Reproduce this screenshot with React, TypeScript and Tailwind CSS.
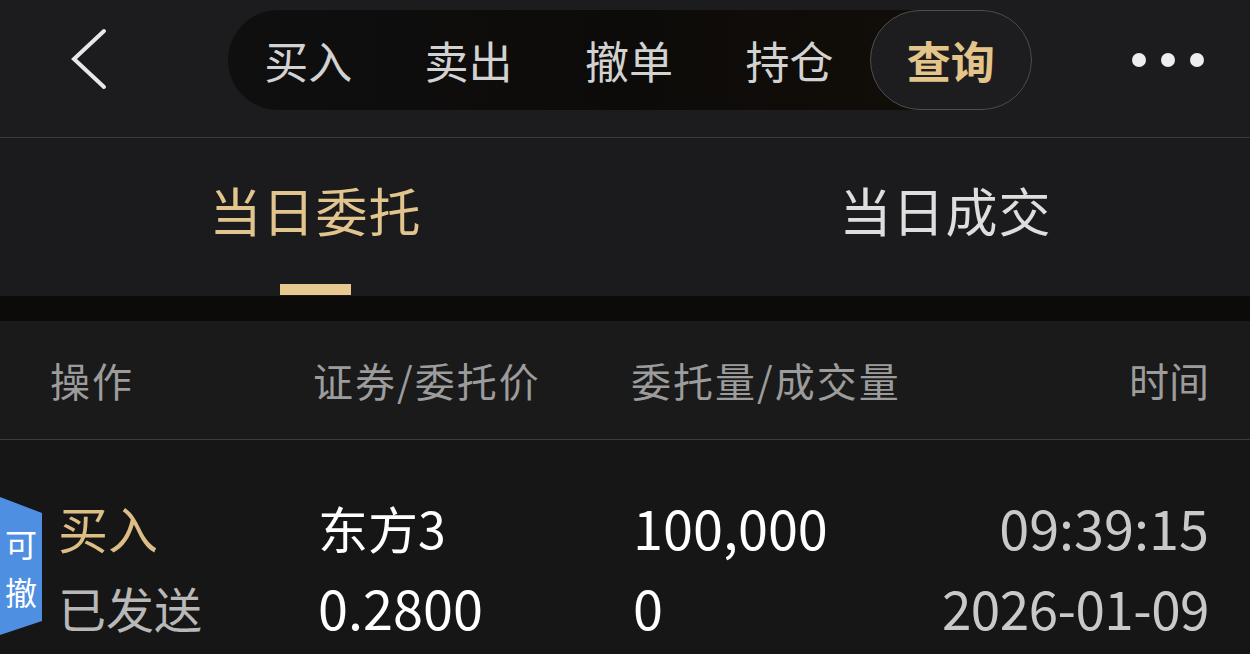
import React from "react";

const F = { fontFamily: '"Noto Sans CJK SC", "Noto Sans", sans-serif' };

function Back() {
  return (
    <svg width="40" height="64" viewBox="0 0 40 64" className="shrink-0">
      <polyline points="34,3 4,31 34,59" fill="none" stroke="#e8e8e8" strokeWidth="4" strokeLinecap="round" strokeLinejoin="miter" />
    </svg>
  );
}

export default function App() {
  const tabs = ["买入", "卖出", "撤单", "持仓", "查询"];
  return (
    <div className="w-[1250px] h-[654px] overflow-hidden bg-[#161616] flex flex-col" style={F}>
      {/* top bar */}
      <div className="h-[138px] shrink-0 bg-[#1c1c1e] border-b border-[#3a3a3c] flex items-start pt-[10px]">
        <div className="w-[228px] h-[100px] flex items-center pl-[70px]">
          <Back />
        </div>
        <div className="w-[804px] h-[100px] rounded-full bg-gradient-to-r from-[#0f0f10] via-[#0d0b09] to-[#130e08] flex">
          {tabs.map((t, i) =>
            i === 4 ? (
              <div key={t} className="flex-1 rounded-full border border-[#4e4e50] bg-[#1d1d1f] flex items-center justify-center text-[44px] font-bold text-[#e3c48b] leading-none">
                {t}
              </div>
            ) : (
              <div key={t} className="flex-1 flex items-center justify-center text-[44px] text-[#d2d2d2] leading-none">
                {t}
              </div>
            )
          )}
        </div>
        <div className="flex-1 h-[100px] flex items-center justify-end pr-[46px] gap-[15px]">
          <span className="w-[14px] h-[14px] rounded-full bg-[#eeeeee]" />
          <span className="w-[14px] h-[14px] rounded-full bg-[#eeeeee]" />
          <span className="w-[14px] h-[14px] rounded-full bg-[#eeeeee]" />
        </div>
      </div>

      {/* sub tabs */}
      <div className="h-[158px] shrink-0 bg-[#1b1b1d] flex">
        <div className="flex-1 flex flex-col items-center">
          <div className="ml-[6px] mt-[46px] text-[52px] leading-none text-[#e2c48e] tracking-[1px]">当日委托</div>
          <div className="ml-[6px] mt-[48px] w-[71px] h-[11px] bg-[#e6c890]" />
        </div>
        <div className="flex-1 flex flex-col items-center">
          <div className="ml-[16px] mt-[46px] text-[52px] leading-none text-[#dedede] tracking-[1px]">当日成交</div>
        </div>
      </div>
      <div className="h-[25px] shrink-0 bg-[#0c0b09]" />

      {/* header */}
      <div className="h-[119px] shrink-0 bg-[#1a1a1a] border-b border-[#3c3c3c] grid grid-cols-[263px_318px_1fr_auto] items-center pl-[50px] pr-[41px] text-[40px] text-[#9c9c9c] leading-none tracking-[2px]">
        <div>操作</div>
        <div>证券/委托价</div>
        <div>委托量/成交量</div>
        <div className="text-right tracking-normal">时间</div>
      </div>

      {/* row */}
      <div className="relative flex-1 bg-[#161616] pt-[60px] pl-[58px] pr-[41px]">
        <div className="absolute left-0 top-[57px] w-[42px] h-[140px]">
          <svg width="42" height="140" viewBox="0 0 42 140" className="absolute inset-0">
            <polygon points="0,0 42,16 42,124 0,138" fill="#4f8fe2" />
          </svg>
          <div className="absolute inset-0 flex flex-col items-center justify-center text-[32px] leading-[48px] text-white">
            <span>可</span>
            <span>撤</span>
          </div>
        </div>
        <div className="grid grid-cols-[260px_315px_1fr_auto] gap-y-[26px] items-center leading-none">
          <div className="text-[50px] text-[#dcbd86]">买入</div>
          <div className="text-[50px] text-white">东方3</div>
          <div className="text-[54px] text-white">100,000</div>
          <div className="text-[54px] text-[#c9c9c9] text-right">09:39:15</div>
          <div className="text-[48px] text-[#b8b8b8]">已发送</div>
          <div className="text-[54px] text-white">0.2800</div>
          <div className="text-[54px] text-white">0</div>
          <div className="text-[53px] text-[#c9c9c9] text-right tracking-[-0.5px]">2026-01-09</div>
        </div>
      </div>
    </div>
  );
}
